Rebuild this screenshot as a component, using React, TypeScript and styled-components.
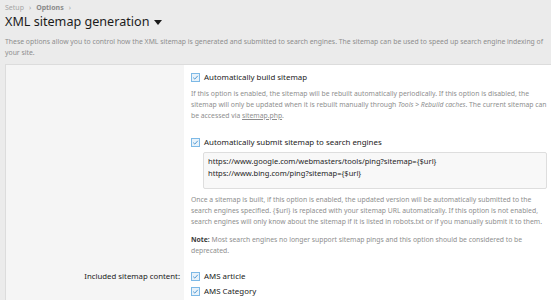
import React from "react"
import styled, { createGlobalStyle } from "styled-components"

const Global = createGlobalStyle`
  html, body {
    margin: 0;
    padding: 0;
    background: #ebebeb;
    font-family: "Noto Sans", "Open Sans", sans-serif;
    color: #141414;
    overflow: hidden;
  }
`

const Page = styled.div`
  padding: 2px 0 0 5px;
  width: 551px;
  box-sizing: border-box;
`

const Crumbs = styled.div`
  display: flex;
  align-items: center;
  gap: 5px;
  font-size: 7px;
  color: #9a9a9a;
  height: 10px;
`

const Crumb = styled.span<{ $bold?: boolean }>`
  font-weight: ${p => (p.$bold ? 700 : 400)};
  color: ${p => (p.$bold ? "#8a8a8a" : "#a5a5a5")};
`

const Title = styled.h1`
  margin: 1px 0 0;
  font-size: 12.6px;
  font-weight: 400;
  line-height: 18px;
  color: #1b1b1b;
  display: flex;
  align-items: center;
  gap: 5px;
`

const Intro = styled.p`
  margin: 5px 0 0;
  font-size: 6.85px;
  line-height: 11px;
  color: #8e8e8e;
`

const Block = styled.div`
  margin-top: 6px;
  width: 545px;
  border: 1px solid #dcdcdc;
  border-right-color: #d3d3d3;
  background: #fff;
  display: grid;
  grid-template-columns: 178px 1fr;
`

const Label = styled.div`
  background: #f5f5f5;
  text-align: right;
  font-size: 7.8px;
  line-height: 12px;
  padding: 0 4px 0 0;
  color: #222;
`

const Field = styled.div<{ $pad?: number }>`
  padding: ${p => p.$pad ?? 0}px 4px 0 7px;
  display: flex;
  flex-direction: column;
`

const CheckRow = styled.label<{ $gap?: number }>`
  display: flex;
  align-items: center;
  gap: 4px;
  font-size: 7.9px;
  line-height: 12px;
  color: #222;
  margin-bottom: ${p => p.$gap ?? 0}px;
`

const Box = styled.span`
  width: 9px;
  height: 9px;
  border: 1px solid #7db9e6;
  background: #e8f2fa;
  box-sizing: border-box;
  display: inline-flex;
  align-items: center;
  justify-content: center;
  flex-shrink: 0;
`

const Hint = styled.div<{ $top?: number; $gap?: number }>`
  font-size: 6.8px;
  line-height: 11px;
  color: #8e8e8e;
  margin-top: ${p => p.$top ?? 0}px;
  margin-bottom: ${p => p.$gap ?? 0}px;

  i { font-style: italic; }
  u { text-decoration: underline; color: #8e8e8e; }
  b { color: #3a3a3a; font-weight: 700; }
`

const Dependent = styled.div`
  margin: 4px 0 0 12px;
`

const Area = styled.div`
  background: #f8f8f8;
  border: 1px solid #dedede;
  border-radius: 2px;
  padding: 2px 4px;
  font-size: 7.55px;
  line-height: 12px;
  color: #252525;
  height: 37px;
  box-sizing: border-box;
`

const Check = () => (
  <Box>
    <svg width="7" height="7" viewBox="0 0 7 7">
      <path d="M1.2 3.6 L2.8 5.1 L5.8 1.8" fill="none" stroke="#3f8fcf" strokeWidth="0.9" />
    </svg>
  </Box>
)

const Caret = () => (
  <svg width="8" height="5" viewBox="0 0 8 5">
    <path d="M0 0 H8 L4 5 Z" fill="#1b1b1b" />
  </svg>
)

export default function App() {
  return (
    <>
      <Global />
      <Page>
        <Crumbs>
          <Crumb>Setup</Crumb>
          <Crumb>›</Crumb>
          <Crumb $bold>Options</Crumb>
          <Crumb>›</Crumb>
        </Crumbs>
        <Title>
          XML sitemap generation <Caret />
        </Title>
        <Intro>
          These options allow you to control how the XML sitemap is generated and submitted to search engines. The
          sitemap can be used to speed up search engine indexing of your site.
        </Intro>
        <Block>
          <Label />
          <Field $pad={6}>
            <CheckRow>
              <Check />
              Automatically build sitemap
            </CheckRow>
            <Hint $top={4.5} $gap={15.5}>
              If this option is enabled, the sitemap will be rebuilt automatically periodically. If this option is
              disabled, the sitemap will only be updated when it is rebuilt manually through <i>Tools</i> &gt;{" "}
              <i>Rebuild caches</i>. The current sitemap can be accessed via <u>sitemap.php</u>.
            </Hint>
            <CheckRow>
              <Check />
              Automatically submit sitemap to search engines
            </CheckRow>
            <Dependent>
              <Area>
                https://www.google.com/webmasters/tools/ping?sitemap={"{$url}"}
                <br />
                https://www.bing.com/ping?sitemap={"{$url}"}
              </Area>
            </Dependent>
            <Hint $top={4.5} $gap={7}>
              Once a sitemap is built, if this option is enabled, the updated version will be automatically submitted
              to the search engines specified. {"{$url}"} is replaced with your sitemap URL automatically. If this
              option is not enabled, search engines will only know about the sitemap if it is listed in robots.txt or
              if you manually submit it to them.
            </Hint>
            <Hint $gap={14.5}>
              <b>Note:</b> Most search engines no longer support sitemap pings and this option should be considered
              to be deprecated.
            </Hint>
          </Field>
          <Label>Included sitemap content:</Label>
          <Field>
            <CheckRow $gap={3}>
              <Check />
              AMS article
            </CheckRow>
            <CheckRow $gap={3}>
              <Check />
              AMS Category
            </CheckRow>
            <CheckRow>
              <Check />
              AMS Series
            </CheckRow>
          </Field>
        </Block>
      </Page>
    </>
  )
}
